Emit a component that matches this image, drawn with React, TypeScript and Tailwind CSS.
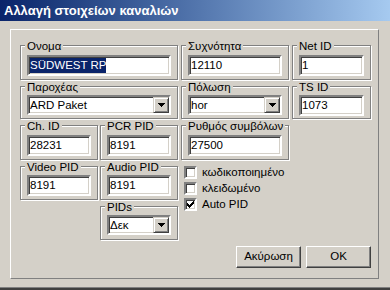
import React from "react";

const sunken =
  "border-2 border-t-[#808080] border-l-[#808080] border-b-white border-r-white shadow-[inset_1px_1px_0_#404040,inset_-1px_-1px_0_#d4d0c8] bg-white";

function Edit({ value, selected }: { value: string; selected?: boolean }) {
  return (
    <div className={`h-[21px] w-full flex items-center pl-[1px] text-[11.5px] leading-[13px] ${sunken}`}>
      {selected ? <span className="bg-[#0a246a] text-white leading-[15px]">{value}</span> : <span>{value}</span>}
    </div>
  );
}

function ArrowDown() {
  return (
    <svg width="7" height="4" viewBox="0 0 7 4" shapeRendering="crispEdges">
      <path d="M0 0h7v1H0z M1 1h5v1H1z M2 2h3v1H2z M3 3h1v1H3z" fill="#000" />
    </svg>
  );
}

function Combo({ value }: { value: string }) {
  return (
    <div className={`h-[20px] w-full flex items-center text-[11.5px] ${sunken}`}>
      <span className="flex-1 pl-[1px] leading-[13px]">{value}</span>
      <span className="h-[16px] w-[16px] flex items-center justify-center bg-[#d4d0c8] border border-t-[#d4d0c8] border-l-[#d4d0c8] border-b-[#404040] border-r-[#404040] shadow-[inset_1px_1px_0_#fff,inset_-1px_-1px_0_#808080]">
        <ArrowDown />
      </span>
    </div>
  );
}

function Group({
  label,
  width,
  box,
  children,
}: {
  label: string;
  width: string;
  box: string;
  children: React.ReactNode;
}) {
  return (
    <div className={`relative pt-[6px] shrink-0 ${width}`}>
      <div className={`border border-[#808080] shadow-[inset_1px_1px_0_#fff,1px_1px_0_#fff] px-[6px] ${box}`}>
        {children}
      </div>
      <span className="absolute left-[5px] top-[1px] bg-[#d4d0c8] px-[2px] text-[11.5px] leading-[12px]">{label}</span>
    </div>
  );
}

function Check({ label, checked }: { label: string; checked?: boolean }) {
  return (
    <div className="flex items-center h-[13px] gap-[5px]">
      <span className={`h-[13px] w-[13px] flex items-center justify-center ${sunken}`}>
        {checked && (
          <svg width="7" height="7" viewBox="0 0 7 7" shapeRendering="crispEdges">
            <path
              d="M6 0h1v3H6z M5 1h1v3H5z M4 2h1v3H4z M3 3h1v3H3z M2 4h1v3H2z M1 3h1v3H1z M0 2h1v3H0z"
              fill="#000"
            />
          </svg>
        )}
      </span>
      <span className="text-[11.5px] leading-[13px]">{label}</span>
    </div>
  );
}

function Button({ label }: { label: string }) {
  return (
    <div className="h-[22px] w-[65px] flex items-center justify-center text-[11.5px] bg-[#d4d0c8] border border-t-white border-l-white border-b-[#404040] border-r-[#404040] shadow-[inset_-1px_-1px_0_#808080]">
      {label}
    </div>
  );
}

export default function App() {
  return (
    <div className="w-[390px] h-[290px] bg-[#d4d0c8] flex flex-col overflow-hidden text-black font-['Liberation_Sans',Arial,sans-serif]">
      <div className="h-[21px] shrink-0 bg-gradient-to-r from-[#0a246a] to-[#a6caf0] pl-[4px] text-white font-bold text-[13px] leading-[21px]">
        Αλλαγή στοιχείων καναλιών
      </div>

      <div className="ml-[10px] mt-[8px] w-[369px] h-[250px] border border-t-white border-l-white border-b-[#808080] border-r-[#808080] pl-[9px] pt-[9px]">
        <div className="flex gap-[3px]">
          <Group label="Ονομα" width="w-[158px]" box="h-[35px] pt-[9px]">
            <Edit value="SÜDWEST RP" selected />
          </Group>
          <Group label="Συχνότητα" width="w-[108px]" box="h-[35px] pt-[9px]">
            <Edit value="12110" />
          </Group>
          <Group label="Net ID" width="w-[79px]" box="h-[35px] pt-[9px]">
            <Edit value="1" />
          </Group>
        </div>

        <div className="flex gap-[3px]">
          <Group label="Παροχέας" width="w-[158px]" box="h-[33px] pt-[8px]">
            <Combo value="ARD Paket" />
          </Group>
          <Group label="Πόλωση" width="w-[108px]" box="h-[33px] pt-[8px]">
            <Combo value="hor" />
          </Group>
          <Group label="TS ID" width="w-[79px]" box="h-[33px] pt-[8px]">
            <Edit value="1073" />
          </Group>
        </div>

        <div className="flex gap-[3px]">
          <div className="flex gap-[2px] w-[158px]">
            <Group label="Ch. ID" width="w-[78px]" box="h-[35px] pt-[9px]">
              <Edit value="28231" />
            </Group>
            <Group label="PCR PID" width="w-[78px]" box="h-[35px] pt-[9px]">
              <Edit value="8191" />
            </Group>
          </div>
          <Group label="Ρυθμός συμβόλων" width="w-[108px]" box="h-[35px] pt-[9px]">
            <Edit value="27500" />
          </Group>
        </div>

        <div className="flex gap-[3px] h-[80px]">
          <div className="w-[158px] flex flex-col">
            <div className="flex gap-[2px]">
              <Group label="Video PID" width="w-[78px]" box="h-[34px] pt-[8px]">
                <Edit value="8191" />
              </Group>
              <Group label="Audio PID" width="w-[78px]" box="h-[34px] pt-[8px]">
                <Edit value="8191" />
              </Group>
            </div>
            <div className="pl-[80px]">
              <Group label="PIDs" width="w-[78px]" box="h-[34px] pt-[8px]">
                <Combo value="Δεκ" />
              </Group>
            </div>
          </div>
          <div className="flex flex-col gap-[3px] pl-[3px] pt-[6px]">
            <Check label="κωδικοποιημένο" />
            <Check label="κλειδωμένο" />
            <Check label="Auto PID" checked />
          </div>
        </div>

        <div className="flex justify-end gap-[5px] w-[351px] mt-[6px]">
          <Button label="Ακύρωση" />
          <Button label="OK" />
        </div>
      </div>

      <div className="mt-auto h-[3px] shrink-0 border-t border-[#808080] bg-[#404040]" />
    </div>
  );
}
